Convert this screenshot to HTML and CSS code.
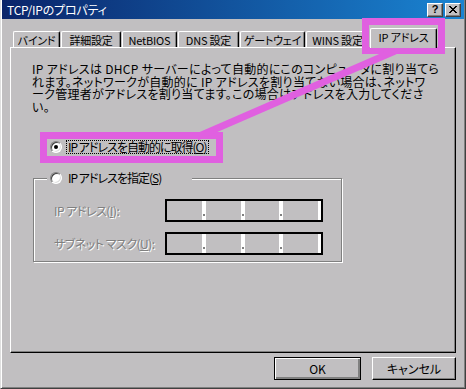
FILE: index.html
```html
<!DOCTYPE html>
<html lang="ja">
<head>
    <meta charset="UTF-8">
    <meta name="viewport" content="width=device-width, initial-scale=1.0">
    <title>TCP/IPのプロパティ</title>
    <link rel="stylesheet" href="styles.css">
</head>
<body>
    <div class="window">
        <div class="titlebar">
            <span class="title">TCP/IPのプロパティ</span>
            <div class="caption-buttons">
                <span class="cap-btn help">?</span>
                <span class="cap-btn close">
                    <svg width="8" height="7" viewBox="0 0 8 7"><path d="M0 0h2v1h-2zM6 0h2v1h-2zM1 1h2v1h-2zM5 1h2v1h-2zM2 2h4v1h-4zM3 3h2v1h-2zM2 4h4v1h-4zM1 5h2v1h-2zM5 5h2v1h-2zM0 6h2v1h-2zM6 6h2v1h-2z" fill="#000"/></svg>
                </span>
            </div>
        </div>

        <div class="dialog">
            <div class="tabs">
                <div class="tab">バインド</div>
                <div class="tab">詳細設定</div>
                <div class="tab">NetBIOS</div>
                <div class="tab">DNS 設定</div>
                <div class="tab">ゲートウェイ</div>
                <div class="tab">WINS 設定</div>
                <div class="tab active">IP アドレス</div>
            </div>

            <div class="panel">
                <p class="desc">IP アドレスは DHCP サーバーによって自動的にこのコンピュータに割り当てら<br>れます。ネットワークが自動的に IP アドレスを割り当てない場合は、ネットワ<br>ーク管理者がアドレスを割り当てます。この場合はアドレスを入力してくださ<br>い。</p>

                <div class="radio-row auto">
                    <span class="radio checked"></span>
                    <span class="radio-label focus">IP アドレスを自動的に取得(<u>O</u>)</span>
                </div>

                <fieldset class="group">
                    <legend class="radio-row">
                        <span class="radio"></span>
                        <span class="radio-label">IP アドレスを指定(<u>S</u>)</span>
                    </legend>

                    <div class="field-row">
                        <span class="field-label">IP アドレス(<u>I</u>):</span>
                        <div class="ip-field">
                            <span class="seg"></span><span class="sep"></span>
                            <span class="seg"></span><span class="sep"></span>
                            <span class="seg"></span><span class="sep"></span>
                            <span class="seg"></span><span class="sep last"></span>
                        </div>
                    </div>
                    <div class="field-row">
                        <span class="field-label">サブネット マスク(<u>U</u>):</span>
                        <div class="ip-field">
                            <span class="seg"></span><span class="sep"></span>
                            <span class="seg"></span><span class="sep"></span>
                            <span class="seg"></span><span class="sep"></span>
                            <span class="seg"></span><span class="sep last"></span>
                        </div>
                    </div>
                </fieldset>
            </div>

            <div class="buttons">
                <span class="btn default">OK</span>
                <span class="btn">キャンセル</span>
            </div>
        </div>

        <!-- annotation drawn over the dialog -->
        <svg class="annotation" width="466" height="389" viewBox="0 0 466 389">
            <g fill="none" stroke="#e060e0" stroke-width="7">
                <rect x="42.5" y="135.5" width="176" height="24"/>
                <rect x="364.5" y="21.5" width="76" height="29"/>
                <line x1="196" y1="137" x2="394" y2="51"/>
            </g>
        </svg>
    </div>
</body>
</html>
```

FILE: styles.css
```css
:root {
    --face: #c1bfc1;
    --shadow: #808080;
    --dark: #000;
    --light: #fff;
    --magenta: #e060e0;
}

body {
    margin: 0;
    background: var(--face);
    font-family: "Noto Sans CJK JP", "Noto Sans", sans-serif;
    font-size: 12px;
    font-feature-settings: "palt";
    color: #000;
}

.window {
    position: relative;
    width: 466px;
    height: 389px;
    box-sizing: border-box;
    background: var(--face);
    border-left: 1px solid #dfdfdf;
    border-right: 1px solid #404040;
    border-bottom: 1px solid #404040;
    box-shadow: inset 1px 0 var(--light), inset -1px -1px var(--shadow);
}

/* title bar */
.titlebar {
    height: 19px;
    margin: 0 1px;
    padding: 0 3px 0 5px;
    display: flex;
    align-items: center;
    justify-content: space-between;
    background: linear-gradient(to right, #0a246a, #1a84d2);
    color: #fff;
}

.title {
    font-size: 12px;
    line-height: 12px;
    letter-spacing: -0.2px;
}

.caption-buttons {
    display: flex;
    gap: 2px;
}

.cap-btn {
    width: 16px;
    height: 14px;
    box-sizing: border-box;
    display: flex;
    align-items: center;
    justify-content: center;
    background: var(--face);
    border: 1px solid;
    border-color: var(--light) #404040 #404040 var(--light);
    box-shadow: inset -1px -1px var(--shadow);
    color: #000;
    font-family: "Liberation Sans", sans-serif;
    font-weight: bold;
    font-size: 11px;
    line-height: 1;
}

/* dialog body */
.dialog {
    padding: 9px 9px 0;
}

.tabs {
    display: flex;
    align-items: flex-end;
    height: 19px;
    padding-left: 2px;
}

.tab {
    height: 16px;
    margin-left: 1px;
    box-sizing: border-box;
    display: flex;
    align-items: center;
    justify-content: center;
    border-top: 1px solid var(--light);
    border-left: 1px solid var(--light);
    border-right: 1px solid var(--dark);
    border-radius: 2px 2px 0 0;
    box-shadow: inset -1px 0 var(--shadow);
    font-size: 11px;
    line-height: 12px;
    letter-spacing: -0.2px;
    white-space: nowrap;
}

.tab:nth-child(1) { width: 47px; }
.tab:nth-child(2) { width: 60px; }
.tab:nth-child(3) { width: 55px; }
.tab:nth-child(4) { width: 61px; }
.tab:nth-child(5) { width: 65px; }
.tab:nth-child(6) { width: 63px; }

.tab.active {
    position: relative;
    z-index: 1;
    width: 67px;
    height: 20px;
    margin-bottom: -1px;
    padding-bottom: 3px;
    background: var(--face);
}

.panel {
    height: 306px;
    box-sizing: border-box;
    padding: 15px 0 0 21px;
    border: 1px solid;
    border-color: var(--light) var(--dark) var(--dark) var(--light);
    box-shadow: inset -1px -1px var(--shadow);
}

.desc {
    margin: 0;
    line-height: 12.5px;
    letter-spacing: 0.3px;
    white-space: nowrap;
}

/* radio buttons */
.radio-row {
    display: flex;
    align-items: center;
    height: 14px;
}

.radio-row.auto {
    margin: 27px 0 0 18px;
}

.radio {
    position: relative;
    width: 12px;
    height: 12px;
    box-sizing: border-box;
    border-radius: 50%;
    border: 1px solid;
    border-color: var(--shadow) var(--light) var(--light) var(--shadow);
    background: #fff;
    box-shadow: inset 1px 1px #404040, inset -1px -1px #dfdfdf;
    flex: none;
}

.radio.checked::after {
    content: "";
    position: absolute;
    left: 3px;
    top: 3px;
    width: 4px;
    height: 4px;
    border-radius: 50%;
    background: #000;
}

.radio-label {
    margin-left: 4px;
    padding: 0 1px;
    line-height: 12px;
    letter-spacing: -1px;
    border: 1px solid transparent;
    white-space: nowrap;
}

.radio-label.focus {
    border: 1px dotted #000;
}

/* group box */
.group {
    width: 309px;
    box-sizing: border-box;
    margin: 17px 0 0 1px;
    padding: 0 0 6px 13px;
    border: 1px solid var(--shadow);
    box-shadow: inset 1px 1px var(--light), 1px 1px var(--light);
}

.group legend {
    width: 145px;
    box-sizing: border-box;
    padding: 0 0 0 3px;
    background: var(--face);
}

.field-row {
    display: flex;
    align-items: center;
    margin-top: 14px;
}

.field-row + .field-row {
    margin-top: 10px;
}

.field-label {
    width: 118px;
    box-sizing: border-box;
    padding-left: 7px;
    color: var(--shadow);
    text-shadow: 1px 1px 0 var(--light);
    letter-spacing: -0.5px;
    white-space: nowrap;
}

.ip-field {
    display: flex;
    width: 158px;
    height: 23px;
    box-sizing: border-box;
    border: 2px solid #000;
    background: var(--face);
}

.seg {
    flex: 1;
}

.sep {
    width: 4px;
    display: flex;
    flex-direction: column;
    justify-content: flex-end;
    align-items: center;
    padding-bottom: 4px;
    box-sizing: border-box;
    background: #fff;
}

.sep::after {
    content: "";
    width: 2px;
    height: 2px;
    background: var(--shadow);
}

.sep.last {
    width: 3px;
}

.sep.last::after {
    display: none;
}

/* buttons */
.buttons {
    display: flex;
    justify-content: flex-end;
    gap: 11px;
    margin-top: 4px;
}

.btn {
    width: 84px;
    height: 23px;
    box-sizing: border-box;
    display: flex;
    align-items: center;
    justify-content: center;
    border: 1px solid;
    border-color: var(--light) #000 #000 var(--light);
    box-shadow: inset -1px -1px var(--shadow);
}

.btn.default {
    width: 87px;
    border: 1px solid #000;
    box-shadow: inset 1px 1px var(--light), inset -2px -2px var(--shadow);
}

.annotation {
    position: absolute;
    left: 0;
    top: 0;
    pointer-events: none;
}
```
